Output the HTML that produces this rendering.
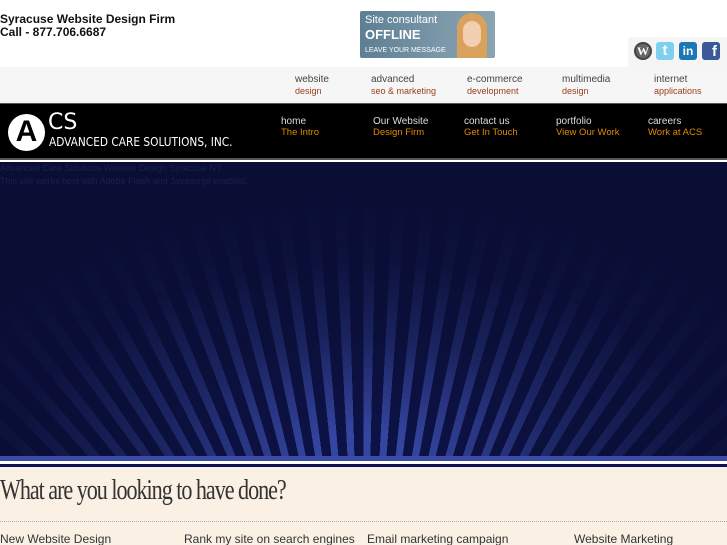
<!DOCTYPE html>
<html><head><style>
*{margin:0;padding:0;box-sizing:border-box}
html,body{width:727px;height:545px;overflow:hidden}
body{font-family:"Liberation Sans",sans-serif;background:#fff;position:relative}
.a{position:absolute}
.t1{left:0;top:13px;font-weight:bold;font-size:12px;line-height:13px;color:#111}
.cons{left:360px;top:11px;width:135px;height:47px;background:linear-gradient(90deg,#5d7e93,#7b98a9 60%,#8aa3b1);border-radius:2px;overflow:hidden}
.cons span{position:absolute;color:#fff}
.soc{left:628px;top:37px;width:99px;height:30px;background:#f5f5f5;border-radius:4px 0 0 0}
.ic{position:absolute;top:42px;width:18px;height:18px;border-radius:3px}
.gray{left:0;top:67px;width:727px;height:37px;background:#f6f6f6;border-bottom:1px solid #555}
.n1{font-size:10px;line-height:10px;color:#444}
.n1 b{display:block;font-weight:normal;color:#9a3d1a;font-size:9px;margin-top:1px}
.blk{left:0;top:104px;width:727px;height:56px;background:#000;border-bottom:2px solid #555}
.n2{font-size:10px;line-height:10px;color:#ddd}
.n2 b{display:block;font-weight:normal;color:#e08a00;font-size:9.5px;margin-top:1px}
.ban{left:0;top:162px;width:727px;height:296px;overflow:hidden;background:#0a0e35}
.rays{position:absolute;left:-400px;top:-300px;width:1527px;height:900px;background:repeating-conic-gradient(from 0deg at 50% 100%,#3545a0 0deg 1.3deg,#0c1245 1.3deg 3deg)}
.fade{position:absolute;left:0;top:0;width:727px;height:296px;background:radial-gradient(ellipse 460px 260px at 50% 100%,rgba(10,14,53,0) 10%,rgba(10,14,53,.6) 45%,rgba(10,14,53,.92) 75%,#0a0e35 100%)}
.cream{left:0;top:467px;width:727px;height:78px;background:#faf1e4}
</style></head><body>
<div class="a t1">Syracuse Website Design Firm<br>Call - 877.706.6687</div>
<div class="a cons"><span style="left:5px;top:3px;font-size:11px">Site consultant</span><span style="left:5px;top:16px;font-size:13px;font-weight:bold">OFFLINE</span><span style="left:5px;top:36px;font-size:7px">LEAVE YOUR MESSAGE</span><div style="position:absolute;left:97px;top:2px;width:30px;height:45px;border-radius:15px 15px 0 0;background:#d9a25c"></div><div style="position:absolute;left:103px;top:10px;width:18px;height:26px;border-radius:9px;background:#f2cfb0"></div></div>
<div class="a soc"></div>
<div class="ic" style="left:634px;border-radius:50%;background:#666;border:2px solid #444;color:#fff;font:bold 12px/14px 'Liberation Serif';text-align:center">W</div>
<div class="ic" style="left:656px;background:#7fd0f0;color:#fff;font:bold 15px/18px 'Liberation Sans';text-align:center">t</div>
<div class="ic" style="left:679px;background:#1b78b5;color:#fff;font:bold 12px/18px 'Liberation Sans';text-align:center">in</div>
<div class="ic" style="left:702px;background:#3b5998;color:#fff;font:bold 15px/20px 'Liberation Sans';text-align:right;padding-right:3px">f</div>
<div class="a gray"></div>
<div class="a n1" style="left:295px;top:75px">website<b>design</b></div>
<div class="a n1" style="left:371px;top:75px">advanced<b>seo &amp; marketing</b></div>
<div class="a n1" style="left:467px;top:75px">e-commerce<b>development</b></div>
<div class="a n1" style="left:562px;top:75px">multimedia<b>design</b></div>
<div class="a n1" style="left:654px;top:75px">internet<b>applications</b></div>
<div class="a blk"></div>
<div class="a" style="left:8px;top:114px;width:37px;height:37px;border-radius:50%;background:#fff"></div>
<div class="a" style="left:12px;top:115px;width:29px;font:bold 30px/34px 'Liberation Sans';color:#000;text-align:center">A</div>
<div class="a" style="left:48px;top:111px;color:#fff;font:22px/24px 'DejaVu Sans',sans-serif">CS</div>
<div class="a" style="left:49px;top:136px;color:#fff;font:12px/13px 'DejaVu Sans Condensed','DejaVu Sans',sans-serif;transform:scaleX(.98);transform-origin:left">ADVANCED CARE SOLUTIONS, INC.</div>
<div class="a n2" style="left:281px;top:117px">home<b>The Intro</b></div>
<div class="a n2" style="left:373px;top:117px">Our Website<b>Design Firm</b></div>
<div class="a n2" style="left:464px;top:117px">contact us<b>Get In Touch</b></div>
<div class="a n2" style="left:556px;top:117px">portfolio<b>View Our Work</b></div>
<div class="a n2" style="left:648px;top:117px">careers<b>Work at ACS</b></div>
<div class="a ban"><div class="rays"></div><div class="fade"></div>
<div style="position:absolute;left:0;top:0;font-size:9px;line-height:13px;color:#1a1f4d">Advanced Care Solutions Website Design Syracuse NY<br>This site works best with Adobe Flash and Javascript enabled.</div></div>
<div class="a" style="left:0;top:456px;width:727px;height:5px;background:#3a4aa5"></div>
<div class="a" style="left:0;top:461px;width:727px;height:3px;background:#fff"></div>
<div class="a" style="left:0;top:464px;width:727px;height:3px;background:#0b1450"></div>
<div class="a cream"></div>
<div class="a" style="left:0;top:475px;font:28px/32px 'Liberation Serif',serif;color:#333;letter-spacing:-1.3px;transform:scaleX(.79);transform-origin:left;white-space:nowrap">What are you looking to have done?</div>
<div class="a" style="left:0;top:521px;width:727px;border-top:1px dotted #aaa"></div>
<div class="a" style="left:0;top:532px;font-size:12px;line-height:14px;color:#333">New Website Design</div>
<div class="a" style="left:184px;top:532px;font-size:12px;line-height:14px;color:#333">Rank my site on search engines</div>
<div class="a" style="left:367px;top:532px;font-size:12px;line-height:14px;color:#333">Email marketing campaign</div>
<div class="a" style="left:574px;top:532px;font-size:12px;line-height:14px;color:#333">Website Marketing</div>
</body></html>
